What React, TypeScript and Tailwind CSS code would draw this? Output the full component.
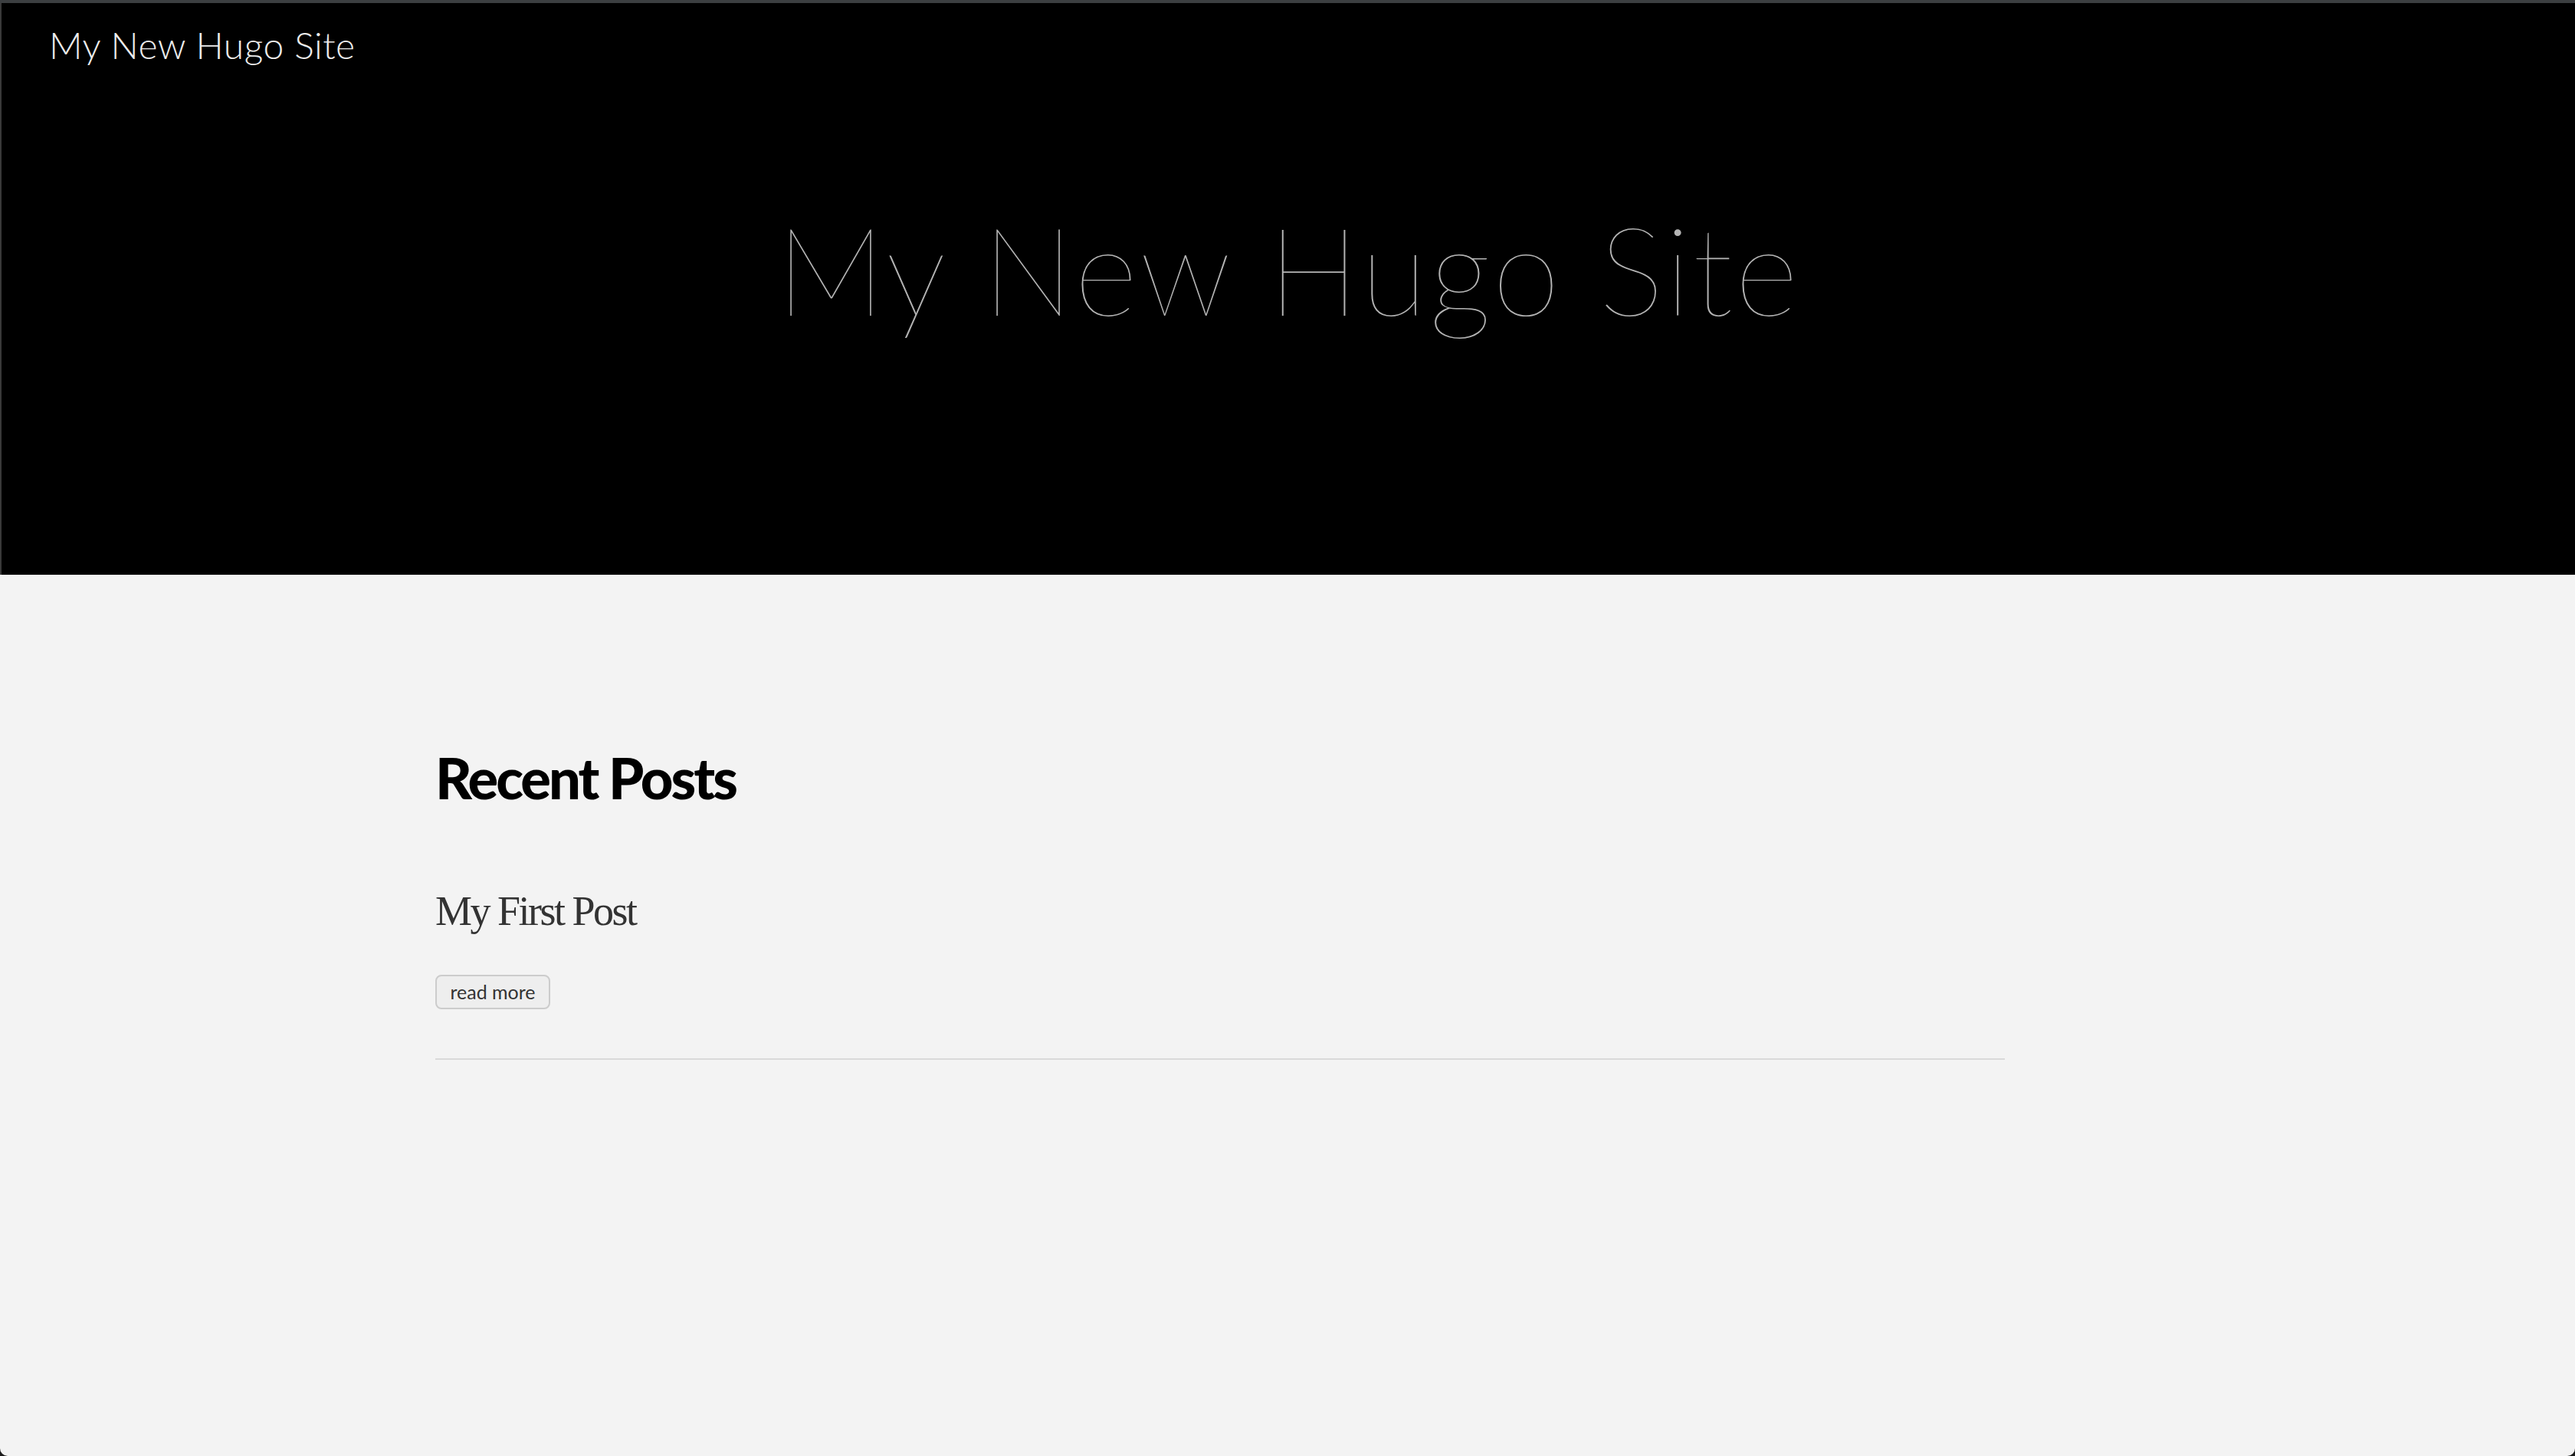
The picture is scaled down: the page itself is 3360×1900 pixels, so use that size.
export default function App() {
    return (
        <div className="h-[1900px] w-full bg-[#1c1c1c]">
            <div className="flex h-full flex-col overflow-hidden rounded-b-[10px] bg-[#f3f3f3]">
                <div className="h-[4px] bg-[#3c3f41]" />
                <header className="h-[746px] border-l-2 border-[#3a3a3a] bg-black font-['Lato',sans-serif]">
                    <nav className="pl-[62px] pt-[26px]">
                        <a className="text-[48px] font-light leading-[1.2] tracking-[0.5px] text-[#ececec]">My New Hugo Site</a>
                    </nav>
                    <h1 className="mt-[182px] text-center text-[160px] font-thin leading-none tracking-[2.8px] text-[#b4b4b4]">
                        My New Hugo Site
                    </h1>
                </header>
                <main className="ml-[568px] w-[2048px]">
                    <h2 className="mt-[228px] font-['Lato',sans-serif] text-[74px] font-black leading-none tracking-[-3px] text-black">
                        Recent Posts
                    </h2>
                    <article className="mt-[110px]">
                        <h3 className="font-['Liberation_Serif',serif] text-[54px] leading-none tracking-[-2.5px] text-[#333]">
                            My First Post
                        </h3>
                        <button className="mt-[56px] h-[45px] w-[150px] rounded-[8px] border-2 border-[#cccccc] bg-[#eeeeee] font-['Lato',sans-serif] text-[25px] text-[#333]">
                            read more
                        </button>
                    </article>
                    <hr className="mt-[64px] border-t-2 border-[#d9d9d9]" />
                </main>
            </div>
        </div>
    );
}
